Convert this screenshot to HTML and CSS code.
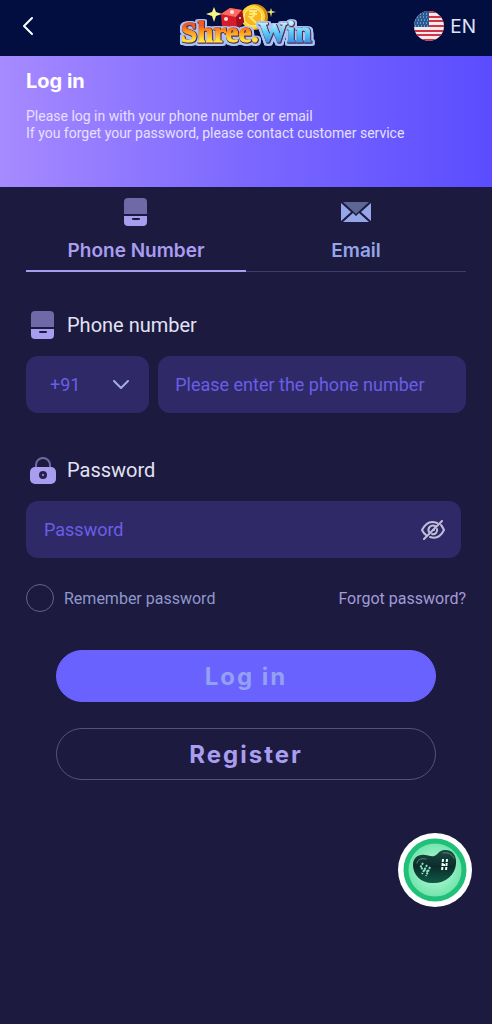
FILE: index.html
```
<!DOCTYPE html>
<html lang="en">
<head>
    <meta charset="UTF-8">
    <meta name="viewport" content="width=device-width, initial-scale=1.0">
    <title>Log in</title>
    <link rel="stylesheet" href="styles.css">
</head>
<body>
    <!-- Shared icons -->
    <svg class="sprite" aria-hidden="true">
        <symbol id="icon-phone" viewBox="0 0 24 28">
            <path d="M4 0h15a4 4 0 0 1 4 4v12H0V4a4 4 0 0 1 4-4z" fill="#7069a8"/>
            <path d="M0 18h23v6a4 4 0 0 1-4 4H4a4 4 0 0 1-4-4z" fill="#a99df0"/>
            <rect x="8" y="20" width="8" height="2" rx="1" fill="#1c1a3e"/>
        </symbol>
    </svg>

    <header class="navbar">
        <button class="back-button" type="button" aria-label="Back">
            <svg width="12" height="20" viewBox="0 0 12 20" fill="none" stroke="#fff" stroke-width="2" stroke-linecap="round" stroke-linejoin="round">
                <path d="M10 2 2 10l8 8"/>
            </svg>
        </button>

        <a class="logo" href="#">
            <svg width="140" height="48" viewBox="0 0 140 48" role="img" aria-label="Shree.Win">
                <defs>
                    <linearGradient id="gold" x1="0" y1="0" x2="0" y2="1">
                        <stop offset="0.3" stop-color="#f4581c"/>
                        <stop offset="0.5" stop-color="#ff9a1c"/>
                        <stop offset="0.75" stop-color="#ffe23c"/>
                    </linearGradient>
                    <linearGradient id="sky" x1="0" y1="0" x2="0" y2="1">
                        <stop offset="0.2" stop-color="#c8f4ff"/>
                        <stop offset="0.5" stop-color="#62cdf8"/>
                        <stop offset="0.9" stop-color="#2b86e4"/>
                    </linearGradient>
                </defs>
                <!-- coin -->
                <circle cx="79" cy="15" r="13" fill="#d98a14"/>
                <circle cx="77" cy="15" r="12" fill="#ffd338"/>
                <circle cx="77" cy="15" r="9" fill="#f7b51e" stroke="#fff09a"/>
                <path d="M73 9h8M73 12h8M74 9c6 0 6 6 0 6l6 6" fill="none" stroke="#ffe774" stroke-width="2"/>
                <!-- dice -->
                <path d="M45 12 54 6l12 2 2 12-7 8-15-2z" fill="#d61c28"/>
                <path d="m45 12 9-6 12 2-6 7z" fill="#ff6a62"/>
                <path d="m60 15 6-7 2 12-7 8z" fill="#9e0f20"/>
                <circle cx="56" cy="10" r="2" fill="#ffe1dc"/>
                <circle cx="50" cy="17" r="2" fill="#ffe1dc"/>
                <circle cx="64" cy="16" r="1" fill="#ffe1dc"/>
                <!-- sparkles -->
                <path d="m38 5 2 5 6 2-6 2-2 6-2-6-6-2 6-2z" fill="#f5f58a"/>
                <path d="m95 6 1 3 4 1-4 1-1 4-1-4-4-1 4-1z" fill="#e6d96a"/>
                <text class="logo-text" x="5" y="40"><tspan fill="url(#gold)" stroke="url(#gold)">Shree.</tspan><tspan fill="url(#sky)" stroke="url(#sky)">Win</tspan></text>
            </svg>
        </a>

        <button class="language-button" type="button">
            <svg width="30" height="30" viewBox="0 0 30 30" aria-hidden="true">
                <clipPath id="flag-clip"><circle cx="15" cy="15" r="15"/></clipPath>
                <g clip-path="url(#flag-clip)">
                    <path fill="#f1e9ee" d="M0 0h30v30H0z"/>
                    <path stroke="#d03444" stroke-width="2" d="M0 1h30M0 6h30M0 10h30M0 15h30M0 20h30M0 24h30M0 29h30"/>
                    <path fill="#285a92" d="M0 0h15v16H0z"/>
                    <g stroke="#b9d2e8" stroke-width="1" stroke-dasharray="1 2">
                        <path d="M6 3h9M3 6h12M1 9h14M3 12h12M1 15h14"/>
                    </g>
                </g>
            </svg>
            EN
        </button>
    </header>

    <section class="banner">
        <h1>Log in</h1>
        <p>Please log in with your phone number or email</p>
        <p>If you forget your password, please contact customer service</p>
    </section>

    <main class="content">
        <div class="tabs" role="tablist">
            <button class="tab active" type="button" role="tab" aria-selected="true">
                <svg class="icon-phone" aria-hidden="true"><use href="#icon-phone"/></svg>
                Phone Number
            </button>
            <button class="tab" type="button" role="tab" aria-selected="false">
                <svg width="30" height="28" viewBox="0 0 30 28" aria-hidden="true">
                    <path d="M2 4h26L15 16z" fill="#5d6795"/>
                    <path d="M0 5l10 9L0 23zM30 5l-10 9 10 9zM2 24l10-9 3 3 3-3 10 9z" fill="#94a6e8"/>
                </svg>
                Email
            </button>
        </div>

        <form class="login-form">
            <label class="field-label" for="phone">
                <svg class="icon-phone" aria-hidden="true"><use href="#icon-phone"/></svg>
                Phone number
            </label>
            <div class="phone-row">
                <div class="code-box">
                    <select class="code-select" aria-label="Country code">
                        <option>+91</option>
                    </select>
                    <svg class="code-arrow" width="16" height="10" viewBox="0 0 16 10" fill="none" stroke="#a3addf" stroke-width="2" stroke-linecap="round" stroke-linejoin="round">
                        <path d="m1 1 7 7 7-7"/>
                    </svg>
                </div>
                <input class="text-input" id="phone" type="tel" placeholder="Please enter the phone number">
            </div>

            <label class="field-label" for="password">
                <svg width="26" height="28" viewBox="0 0 26 28" aria-hidden="true">
                    <path d="M6 12V9a7 7 0 0 1 14 0v3" fill="none" stroke="#6f68a6" stroke-width="2"/>
                    <rect y="11" width="26" height="17" rx="5" fill="#a99df0"/>
                    <circle cx="13" cy="19" r="4" fill="#262052"/>
                    <circle cx="13" cy="19" r="1" fill="#a99df0"/>
                </svg>
                Password
            </label>
            <div class="password-box">
                <input class="password-input" id="password" type="password" placeholder="Password">
                <button class="eye-button" type="button" aria-label="Show password">
                    <svg width="24" height="20" viewBox="0 0 24 20" fill="none" stroke="#c3bdd9" stroke-width="2" stroke-linecap="round">
                        <path d="M16 3C9 0 4 4 1 10c1 2 2 4 4 5M20 5c1 1 2 3 3 5-3 6-8 9-14 7"/>
                        <path d="M14 6c-4-2-8 2-6 6M16 9c1 3-2 6-5 5M12 10h1"/>
                        <path d="M21 1 3 19"/>
                    </svg>
                </button>
            </div>

            <div class="options">
                <label class="remember">
                    <input type="checkbox">
                    Remember password
                </label>
                <a href="#">Forgot password?</a>
            </div>

            <div class="actions">
                <button class="action-button login" type="submit">Log in</button>
                <button class="action-button" type="button">Register</button>
            </div>
        </form>
    </main>

    <button class="float-button" type="button" aria-label="Game">
        <svg width="74" height="74" viewBox="0 0 74 74">
            <defs>
                <radialGradient id="mint">
                    <stop offset="0.3" stop-color="#a9f5cf"/>
                    <stop offset="1" stop-color="#6be3a8"/>
                </radialGradient>
                <linearGradient id="bean" x1="0" y1="0" x2="0" y2="1">
                    <stop offset="0" stop-color="#1d4a42"/>
                    <stop offset="0.5" stop-color="#0b2c2a"/>
                    <stop offset="1" stop-color="#0f5a45"/>
                </linearGradient>
            </defs>
            <circle cx="37" cy="37" r="37" fill="#fff"/>
            <circle cx="37" cy="37" r="29" fill="url(#mint)" stroke="#20c07a" stroke-width="5"/>
            <path d="M15 32c0-7 5-11 12-10 4 0 6 2 9 1 4-1 4-5 10-6 8-1 13 5 12 14-1 12-12 20-24 19-11 0-19-8-19-18z" fill="url(#bean)"/>
            <path d="M19 30c1-4 5-5 9-4M45 20c5-1 9 1 11 5" fill="none" stroke="#54877a" stroke-width="1" stroke-linecap="round"/>
            <g fill="none" stroke="#8fe0c4" stroke-width="2" stroke-dasharray="2 1">
                <path d="m25 30-3 5M29 32l-5 9M32 34l-4 9M23 35l8 4"/>
            </g>
            <g fill="none" stroke="#f0fff9" stroke-width="2" stroke-dasharray="3 1">
                <path d="m45 26-1 12M49 26l-1 12M44 32h5"/>
            </g>
        </svg>
    </button>
</body>
</html>
```
FILE: styles.css
```
* {
    box-sizing: border-box;
}

body {
    margin: 0;
    min-height: 100vh;
    background-color: #1c1a3e;
    color: #e3e2f5;
    font-family: Roboto, "Liberation Sans", sans-serif;
    font-size: 18px;
}

button,
input,
select {
    font-family: inherit;
    font-size: inherit;
}

button {
    border: none;
    background: none;
    padding: 0;
    cursor: pointer;
}

svg {
    display: block;
    flex-shrink: 0;
}

a {
    color: inherit;
    text-decoration: none;
}

.sprite {
    display: none;
}

.icon-phone {
    width: 24px;
    height: 28px;
}

.banner h1,
.tab,
.language-button,
.action-button {
    font-family: Inter, "Liberation Sans", sans-serif;
}

/* Top bar */
.navbar {
    display: grid;
    grid-template-columns: 1fr auto 1fr;
    align-items: center;
    height: 56px;
    padding: 0 16px 4px;
    background-color: #020e40;
}

.back-button {
    justify-self: start;
    padding-left: 6px;
}

.logo-text {
    font-family: "Liberation Serif", serif;
    font-size: 29px;
    font-weight: bold;
    stroke-width: 1px;
    stroke-linejoin: round;
    filter: drop-shadow(1px 0 #5a2c50) drop-shadow(0 1px #5a2c50) drop-shadow(2px 0 #a9c4f4) drop-shadow(-2px 0 #a9c4f4) drop-shadow(0 2px #a9c4f4) drop-shadow(0 -1px #a9c4f4);
}

.language-button {
    display: flex;
    align-items: center;
    gap: 6px;
    justify-self: end;
    color: #dfe4f5;
    font-size: 19px;
}

/* Banner */
.banner {
    height: 131px;
    padding: 12px 26px;
    background: linear-gradient(90deg, #a68aff, #7c68ff 50%, #5b4dff);
    color: #e6e0ff;
    font-size: 14px;
    line-height: 17px;
}

.banner h1 {
    margin: 0 0 14px;
    color: #fff;
    font-size: 20px;
    line-height: 26px;
}

.banner p {
    margin: 0;
}

.content {
    padding: 11px 26px 40px;
}

/* Tabs */
.tabs {
    display: flex;
    border-bottom: 1px solid #3f3d68;
}

.tab {
    display: flex;
    flex: 1;
    flex-direction: column;
    align-items: center;
    gap: 13px;
    margin-bottom: -1px;
    padding-bottom: 7px;
    border-bottom: 2px solid transparent;
    color: #94a6e8;
    font-size: 19px;
    font-weight: 600;
    line-height: 24px;
}

.tab.active {
    border-bottom-color: #a99df0;
    color: #a99df0;
}

/* Form */
.field-label {
    display: flex;
    align-items: center;
    gap: 11px;
    margin: 39px 0 17px;
    padding-left: 4px;
    font-size: 20px;
    line-height: 28px;
}

.field-label svg {
    width: 26px;
}

.phone-row {
    display: flex;
    gap: 9px;
    margin-bottom: 43px;
}

.code-box {
    position: relative;
    flex: 0 0 28%;
}

.code-select,
.text-input,
.password-box {
    height: 57px;
    border: none;
    border-radius: 12px;
    background-color: #2f2968;
    color: #6a5ee6;
}

.code-select {
    width: 100%;
    padding: 0 24px;
    appearance: none;
}

.code-arrow {
    position: absolute;
    top: 24px;
    right: 20px;
    pointer-events: none;
}

.text-input {
    flex: 1;
    min-width: 0;
    padding: 0 17px;
}

.text-input::placeholder,
.password-input::placeholder {
    color: #6a5ee6;
    opacity: 1;
}

.password-box {
    display: flex;
    align-items: center;
    margin-right: 5px;
    padding: 0 16px 0 18px;
}

.password-input {
    flex: 1;
    min-width: 0;
    padding: 0;
    border: none;
    background: none;
    color: inherit;
}

.options {
    display: flex;
    align-items: center;
    justify-content: space-between;
    margin-top: 26px;
    color: #a29bd8;
    font-size: 16px;
}

.remember {
    display: flex;
    align-items: center;
    gap: 10px;
    color: #8f98cc;
}

.remember input {
    width: 28px;
    height: 28px;
    margin: 0;
    border: 1px solid #66628f;
    border-radius: 50%;
    appearance: none;
}

.remember input:checked {
    background-color: #6a62ff;
}

.actions {
    display: flex;
    flex-direction: column;
    gap: 26px;
    margin-top: 38px;
    padding: 0 30px;
}

.action-button {
    height: 52px;
    border: 1px solid #55517f;
    border-radius: 26px;
    color: #a99df0;
    font-size: 24px;
    font-weight: 700;
    letter-spacing: 2px;
}

.action-button.login {
    border-color: #6a62ff;
    background-color: #6a62ff;
    color: #94a0f0;
}

.float-button {
    position: fixed;
    right: 20px;
    bottom: 117px;
}
```
